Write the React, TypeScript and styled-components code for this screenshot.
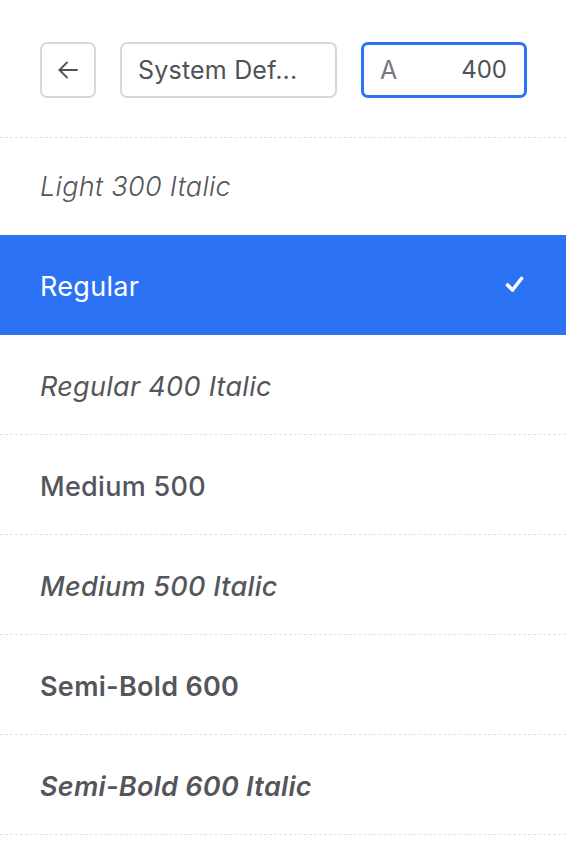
import React from "react";
import styled, { createGlobalStyle, css } from "styled-components";

const Global = createGlobalStyle`
  html, body { margin: 0; padding: 0; background: #ffffff; }
  body { font-family: Inter, "Noto Sans", "Liberation Sans", sans-serif; overflow: hidden; }
  * { box-sizing: border-box; }
`;

const Page = styled.div`
  width: 566px;
  height: 860px;
  overflow: hidden;
  background: #ffffff;
`;

const Header = styled.div`
  display: flex;
  align-items: center;
  gap: 24px;
  height: 138px;
  padding: 42px 39px 40px 40px;
  border-bottom: 1px dashed #e2e2e4;
  position: relative;
  z-index: 1;
  background: #fff;
`;

const BackButton = styled.button`
  width: 56px;
  height: 56px;
  flex: none;
  display: flex;
  align-items: center;
  justify-content: center;
  border: 2px solid #d8d8da;
  border-radius: 7px;
  background: #fff;
  padding: 0;
  color: #4d5055;
`;

const FontField = styled.div`
  width: 217px;
  height: 56px;
  flex: none;
  display: flex;
  align-items: center;
  padding: 0 16px;
  border: 2px solid #d8d8da;
  border-radius: 7px;
  font-size: 25px;
  letter-spacing: 0.2px;
  color: #4f5257;
  white-space: nowrap;
`;

const WeightField = styled.div`
  flex: 1;
  height: 56px;
  display: flex;
  align-items: center;
  justify-content: space-between;
  padding: 0 17px 0 16px;
  border: 3px solid #2c72f5;
  border-radius: 7px;
  font-size: 24px;
  color: #4f5257;
`;

const Glyph = styled.span`
  color: #77797d;
  font-size: 25px;
`;

const List = styled.div`
  margin-top: -3px;
`;

const Row = styled.div<{ $selected?: boolean; $hideBorder?: boolean }>`
  height: 100px;
  display: flex;
  align-items: center;
  justify-content: space-between;
  padding: 4px 44px 0 40px;
  font-size: 27px;
  letter-spacing: 0.3px;
  color: #53565b;
  border-bottom: 1px dashed ${(p) => (p.$hideBorder ? "transparent" : "#e2e2e4")};
  ${(p) =>
    p.$selected &&
    css`
      background: #2c72f5;
      color: #ffffff;
      border-bottom-color: transparent;
    `}
`;

const Label = styled.span<{ $weight: number; $italic: boolean }>`
  font-weight: ${(p) => p.$weight};
  font-style: ${(p) => (p.$italic ? "italic" : "normal")};
`;

const Check = styled.svg`
  margin-top: -4px;
  margin-right: -2px;
`;

const items = [
  { label: "Light 300 Italic", weight: 300, italic: true },
  { label: "Regular", weight: 400, italic: false, selected: true },
  { label: "Regular 400 Italic", weight: 400, italic: true },
  { label: "Medium 500", weight: 500, italic: false },
  { label: "Medium 500 Italic", weight: 500, italic: true },
  { label: "Semi-Bold 600", weight: 600, italic: false },
  { label: "Semi-Bold 600 Italic", weight: 600, italic: true },
];

export default function App() {
  return (
    <Page>
      <Global />
      <Header>
        <BackButton aria-label="Back">
          <svg width="20" height="18" viewBox="0 0 20 18" fill="none" stroke="currentColor" strokeWidth="1.8" strokeLinecap="round" strokeLinejoin="round">
            <path d="M19 9H1.5" />
            <path d="M9 1.5L1.5 9L9 16.5" />
          </svg>
        </BackButton>
        <FontField>System Def...</FontField>
        <WeightField>
          <Glyph>A</Glyph>
          <span>400</span>
        </WeightField>
      </Header>
      <List>
        {items.map((it, i) => (
          <Row key={it.label} $selected={it.selected} $hideBorder={items[i + 1]?.selected}>
            <Label $weight={it.weight} $italic={it.italic}>{it.label}</Label>
            {it.selected && (
              <Check width="19" height="17" viewBox="0 0 19 17" fill="none" stroke="#ffffff" strokeWidth="3.6" strokeLinecap="round" strokeLinejoin="round">
                <path d="M2.5 9L7.5 14L16.5 2.5" />
              </Check>
            )}
          </Row>
        ))}
      </List>
    </Page>
  );
}
